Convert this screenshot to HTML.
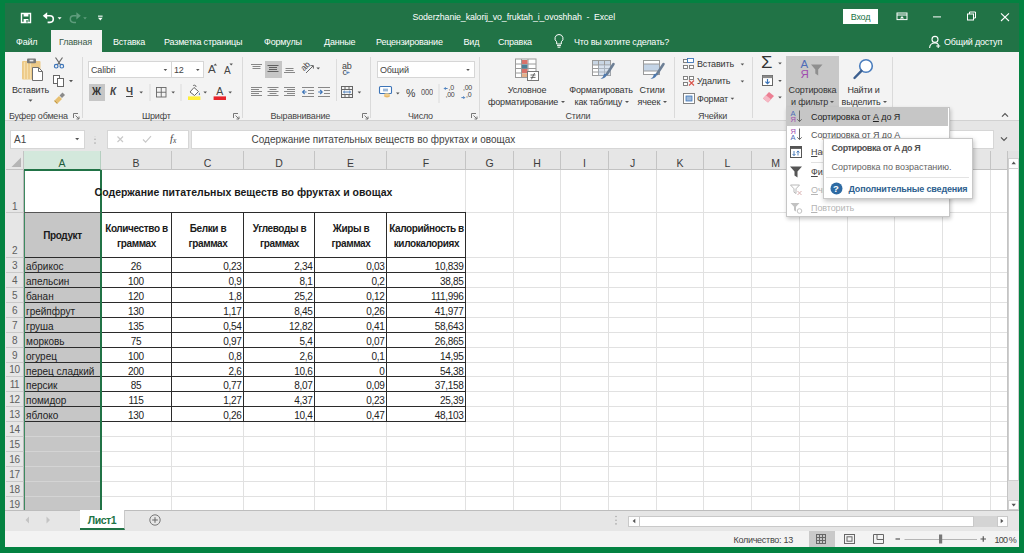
<!DOCTYPE html>
<html lang="ru">
<head>
<meta charset="utf-8">
<title>Soderzhanie_kalorij_vo_fruktah_i_ovoshhah - Excel</title>
<style>
*{box-sizing:border-box;margin:0;padding:0}
html,body{width:1024px;height:553px;overflow:hidden;background:#038241}
body{position:relative;font-family:"Liberation Sans",sans-serif;font-size:10px;color:#333;-webkit-font-smoothing:antialiased}
.abs,.abs>*{position:absolute}
#app{position:absolute;left:5px;top:3px;width:1014px;height:544px;background:#e6e6e6;overflow:hidden}
/* title bar */
#title{position:absolute;left:0;top:0;width:1014px;height:49px;background:#217346}
.t{position:absolute;white-space:nowrap;line-height:12px}
.w{color:#fff}
.tb{top:33px;font-size:9px;letter-spacing:-.2px}
#tabactive{position:absolute;left:46px;top:27px;width:51px;height:23px;background:#f3f3f3}
/* ribbon */
#ribbon{position:absolute;left:0;top:49px;width:1014px;height:69px;background:#f3f3f3;border-bottom:1px solid #d2d2d2}
.pg{position:absolute;width:1024px;height:553px}
.pg>*{position:absolute}
.rt{position:absolute;white-space:nowrap;font-size:9px;line-height:12px;letter-spacing:-.15px;color:#333}
.ln{position:absolute}
.ar{display:inline-block;width:0;height:0;border-left:2px solid transparent;border-right:2px solid transparent;border-top:2.2px solid #555;vertical-align:middle;margin-left:0}
.sep{position:absolute;top:57px;width:1px;height:61px;background:#dadada}
.gl{position:absolute;top:110px;font-size:9px;letter-spacing:-.2px;color:#444;white-space:nowrap;line-height:12px}
/* formula bar */
#fbar{position:absolute;left:0;top:119px;width:1014px;height:29px;background:#e6e6e6}
.box{position:absolute;background:#fff;border:1px solid #d6d6d6}
/* grid */
#grid{position:absolute;left:1px;top:148px;width:1001px;height:359px;background:#fff;overflow:hidden}
.ch{position:absolute;top:0;height:19px;padding-top:6px;line-height:12px;text-align:center;font-size:10.5px;color:#3c3c3c;background:#e6e6e6;border-right:1px solid #c4c4c4;border-bottom:1px solid #c2c2c2}
.rh{position:absolute;left:0;width:18px;text-align:center;font-size:10px;letter-spacing:-.4px;color:#5e5e5e;background:#e6e6e6;border-bottom:1px solid #c9c9c9;border-right:1px solid #b9b9b9}
.c{position:absolute;font-size:10px;line-height:17px;height:15px;white-space:nowrap;color:#222;letter-spacing:0}
.r{text-align:right;padding-right:1.5px;letter-spacing:-.3px}
.m{text-align:center;letter-spacing:-.3px}
.l{padding-left:2px}
.hd{position:absolute;font-size:10px;font-weight:bold;line-height:15px;text-align:center;color:#1a1a1a;letter-spacing:-.38px}
/* sheet tabs & status */
#sheetbar{position:absolute;left:0;top:507px;width:1014px;height:21px;background:#e6e6e6;border-top:1px solid #bdbdbd}
#status{position:absolute;left:0;top:528px;width:1014px;height:16px;background:#f3f3f3;overflow:hidden}
</style>
</head>
<body>
<div id="app">
<!--TITLE-->
<div id="title"><div style="position:absolute;left:1px;top:0;width:1012px;height:49px">
<!-- quick access toolbar -->
<svg style="position:absolute;left:14px;top:8px" width="90" height="16" viewBox="0 0 90 16">
 <!-- save -->
 <path d="M1.5 2.5 H10.5 V11.5 H1.5 Z" fill="none" stroke="#fff" stroke-width="1.4"/>
 <rect x="3.6" y="2.5" width="4.8" height="3" fill="#fff"/>
 <rect x="3.6" y="8" width="4.8" height="3.5" fill="#fff"/><rect x="6.4" y="9" width="1.2" height="2.5" fill="#217346"/>
 <!-- undo -->
 <path d="M27 4.800 H30 A3.300 3.300 0 0 1 30 11.400 H27.600" fill="none" stroke="#fff" stroke-width="1.600"/>
 <path d="M22.800 4.800 L27.200 1.200 V8.400 Z" fill="#fff"/>
 <path d="M37.600 6.200 h4 l-2 2.400 z" fill="#fff"/>
 <!-- redo (disabled) -->
 <path d="M56.600 4.800 H53.600 A3.300 3.300 0 0 0 53.600 11.400 H56" fill="none" stroke="#5f9d7d" stroke-width="1.500"/>
 <path d="M60.800 4.800 L56.400 1.200 V8.400 Z" fill="#5f9d7d"/>
 <path d="M63.200 6.200 h3.600 l-1.800 2.200 z" fill="#5f9d7d"/>
 <!-- customize -->
 <rect x="78" y="4.600" width="4.600" height="1.100" fill="#fff"/>
 <path d="M78 6.800 h4.600 l-2.300 2.600 z" fill="#fff"/>
</svg>
<div class="t w" style="left:0;width:1012px;top:8px;text-align:center;font-size:8.8px;letter-spacing:-.095px;padding-left:3.5px">Soderzhanie_kalorij_vo_fruktah_i_ovoshhah &nbsp;-&nbsp; Excel</div>
<div style="position:absolute;left:837px;top:6px;width:35px;height:15px;background:#fff"></div>
<div class="t" style="left:837px;top:8px;width:35px;text-align:center;font-size:9px;color:#217346;letter-spacing:-.2px">Вход</div>
<svg style="position:absolute;left:886px;top:6px" width="122" height="16" viewBox="0 0 122 16">
 <!-- ribbon display options -->
 <rect x="5" y="4" width="10" height="6.6" fill="none" stroke="#fff" stroke-width="1"/>
 <line x1="5" y1="6" x2="15" y2="6" stroke="#fff" stroke-width="1"/>
 <path d="M10 7 l2 2.6 h-4 z" fill="#fff"/>
 <!-- minimize -->
 <rect x="41" y="7.4" width="8" height="1" fill="#fff"/>
 <!-- restore -->
 <rect x="75.5" y="5" width="6" height="6" fill="none" stroke="#fff" stroke-width="1"/>
 <path d="M77.5 5 V3 H83.5 V9 H81.5" fill="none" stroke="#fff" stroke-width="1"/>
 <!-- close -->
 <path d="M109 4.4 L117 12 M117 4.4 L109 12" stroke="#fff" stroke-width="1.1" fill="none"/>
</svg>
</div></div>
<div id="tabactive"></div>
<div id="tabs" style="position:absolute;left:1px;top:0">
<div class="t w tb" style="left:10px">Файл</div>
<div class="t tb" style="left:53px;color:#3a5a48">Главная</div>
<div class="t w tb" style="left:107px">Вставка</div>
<div class="t w tb" style="left:158px">Разметка страницы</div>
<div class="t w tb" style="left:258px">Формулы</div>
<div class="t w tb" style="left:318px">Данные</div>
<div class="t w tb" style="left:370px">Рецензирование</div>
<div class="t w tb" style="left:457.5px">Вид</div>
<div class="t w tb" style="left:492px">Справка</div>
<svg style="position:absolute;left:546px;top:30px" width="14" height="16" viewBox="0 0 14 16"><path d="M7 1.5 A4 4 0 0 1 9.3 8.8 V11 H4.7 V8.8 A4 4 0 0 1 7 1.5 Z" fill="none" stroke="#fff" stroke-width="1"/><path d="M5 12.6 H9 M5.6 14.2 H8.4" stroke="#fff" stroke-width="1"/></svg>
<div class="t w tb" style="left:568px">Что вы хотите сделать?</div>
<svg style="position:absolute;left:922px;top:32px" width="14" height="14" viewBox="0 0 14 14"><circle cx="7" cy="4.4" r="3" fill="none" stroke="#fff" stroke-width="1.1"/><path d="M1.6 13 C1.8 9.6 4 8 7 8 C8.4 8 9.4 8.4 10 9" fill="none" stroke="#fff" stroke-width="1.1"/><path d="M10.2 9 V13 M8.2 11 H12.2" stroke="#fff" stroke-width="1.1"/></svg>
<div class="t w tb" style="left:938px">Общий доступ</div>
</div>

<!--RIBBON-->
<div id="ribbon"><div class="pg" style="left:-5px;top:-52px">
<!-- ===== Clipboard ===== -->
<svg style="position:absolute;left:18px;top:56px" width="66" height="50" viewBox="0 0 66 50">
 <!-- paste -->
 <rect x="4" y="5" width="18.500" height="18.500" rx="1" fill="#ecc987"/>
 <path d="M6.500 6 V23 M9.500 6 V23 M12.500 6 V23" stroke="#f6dfae" stroke-width="1.300"/>
 <rect x="9" y="2.600" width="9" height="4.600" rx="1" fill="#7a7a7a"/><rect x="11.600" y="3.800" width="3.800" height="1.600" fill="#e9e9e9"/>
 <path d="M14.500 11.500 H20.500 L24.500 15.500 V24.500 H14.500 Z" fill="#fff" stroke="#6f6f6f" stroke-width="1"/>
 <path d="M20.500 11.500 V15.500 H24.500" fill="none" stroke="#6f6f6f" stroke-width="1"/>
 <path d="M10.5 43.600 h4 l-2 2.200 z" fill="#555"/>
 <!-- cut -->
 <path d="M37.500 1.500 L42.600 8.800 M44.500 1.500 L39.400 8.800" stroke="#6b6b6b" stroke-width="1.200" fill="none"/>
 <circle cx="38.200" cy="10.200" r="1.800" fill="none" stroke="#3c74b8" stroke-width="1.200"/>
 <circle cx="43.800" cy="10.200" r="1.800" fill="none" stroke="#3c74b8" stroke-width="1.200"/>
 <!-- copy -->
 <rect x="35.5" y="19.5" width="6" height="8" fill="#fff" stroke="#666" stroke-width="1"/>
 <rect x="39.5" y="22.5" width="6" height="8" fill="#fff" stroke="#666" stroke-width="1"/>
 <path d="M51 24 h4 l-2 2.2 z" fill="#555"/>
 <!-- format painter -->
 <path d="M37 44 L41 40 L44 43 L40 47 Z" fill="#e8c070"/>
 <path d="M41.5 39.5 L44.5 36.5 L47 39 L44 42 Z" fill="#8a8a8a"/>
 <path d="M36.5 44.5 l3 3" stroke="#c79a3c" stroke-width="1.2"/>
</svg>
<div class="rt" style="left:12px;top:83.500px;width:37px;text-align:center">Вставить</div>
<div class="gl" style="left:9px">Буфер обмена</div>
<svg class="ln" style="left:73px;top:113px" width="7" height="7" viewBox="0 0 7 7"><path d="M.5 5 V.5 H5" fill="none" stroke="#777"/><path d="M2.5 2.5 L6 6 M6 3.5 V6 H3.5" fill="none" stroke="#777"/></svg>
<div class="sep" style="left:82px"></div>
<!-- ===== Font ===== -->
<div class="box" style="left:88px;top:61px;width:84px;height:17px"></div>
<div class="box" style="left:171px;top:61px;width:33px;height:17px"></div>
<div class="rt" style="left:91px;top:64px;color:#444">Calibri</div>
<div class="rt" style="left:174px;top:64px;color:#444">12</div>
<svg style="position:absolute;left:160px;top:60px" width="80" height="20" viewBox="0 0 80 20">
 <path d="M3.6 9 h3.6 l-1.8 2 z M36 9 h3.6 l-1.8 2 z" fill="#555"/>
 <path d="M53.5 5.5 l1.8 -2 l1.8 2 z" fill="#555"/><path d="M69.5 3.6 l1.7 2 l1.7 -2 z" fill="#555"/>
</svg>
<div class="rt" style="left:208px;top:62px;font-size:11.5px;line-height:14px;color:#444">A</div>
<div class="rt" style="left:224px;top:63.5px;font-size:10px;line-height:14px;color:#444">A</div>
<div style="position:absolute;left:88.5px;top:83.5px;width:16px;height:17.5px;background:#c6c6c6"></div>
<div class="rt" style="left:88.5px;top:86px;width:16px;text-align:center;font-weight:bold;font-size:10px;color:#333">Ж</div>
<div class="rt" style="left:109px;top:86px;width:8px;text-align:center;font-weight:bold;font-style:italic;font-size:10px;color:#444">К</div>
<div class="rt" style="left:125.5px;top:86px;width:8px;text-align:center;font-weight:bold;font-size:10px;color:#444;text-decoration:underline">Ч</div>
<svg style="position:absolute;left:136px;top:82px" width="104" height="22" viewBox="0 0 104 22">
 <path d="M3.4 9.6 h3.6 l-1.8 2 z M35.4 9.6 h3.6 l-1.8 2 z M67.4 9.6 h3.6 l-1.8 2 z M92.4 9.6 h3.6 l-1.8 2 z" fill="#555"/>
 <rect x="13.5" y="2" width="1" height="17" fill="#dcdcdc"/><rect x="44.5" y="2" width="1" height="17" fill="#dcdcdc"/>
 <!-- borders -->
 <rect x="20.500" y="5.500" width="9.500" height="9.500" fill="none" stroke="#666" stroke-width=".9"/><path d="M25.250 5.500 V15 M20.500 10.250 H30" stroke="#666" stroke-width=".9"/>
 <!-- fill bucket -->
 <path d="M54 10 L58 5.5 L62.5 9.5 L58.5 13.5 Z" fill="#fff" stroke="#666" stroke-width="1"/><path d="M57 4 a1.6 1.6 0 0 1 3 1" fill="none" stroke="#666" stroke-width=".9"/><path d="M63.4 10.5 q1.4 2 0 2.8 q-1.4 -.8 0 -2.8z" fill="#4a7dbd"/>
 <rect x="52" y="14.4" width="12.4" height="3.6" fill="#ffef3a"/>
 <!-- font color -->
 <rect x="77.6" y="14.4" width="12.4" height="3.6" fill="#e8242b"/>
</svg>
<div class="rt" style="left:213.5px;top:84.5px;width:12.4px;text-align:center;font-size:10.5px;color:#444">A</div>
<div class="gl" style="left:142px">Шрифт</div>
<svg class="ln" style="left:232.5px;top:113px" width="7" height="7" viewBox="0 0 7 7"><path d="M.5 5 V.5 H5" fill="none" stroke="#777"/><path d="M2.5 2.5 L6 6 M6 3.5 V6 H3.5" fill="none" stroke="#777"/></svg>
<div class="sep" style="left:241.500px"></div>
<!-- ===== Alignment ===== -->
<div style="left:264.5px;top:60.5px;width:17px;height:17.5px;background:#c6c6c6"></div>
<svg style="left:248px;top:58px" width="120" height="46" viewBox="0 0 120 46">
 <g stroke="#7a7a7a" stroke-width=".9" fill="none">
 <!-- top/middle/bottom align (row1 center y=10) -->
 <path d="M3 6.5 H14 M4.5 8.5 H12.5 M4.5 10.5 H12.5"/>
 <path d="M19.5 7.5 H30.5 M21 9.5 H29 M21 11.5 H29 M19.5 13.5 H30.5" stroke="#555"/>
 <path d="M37.5 10.5 H45.5 M37.5 12.5 H45.5 M36 14.5 H47"/>
 <!-- left/center/right (row2 center y=34) -->
 <path d="M3 29.5 H14 M3 31.5 H11 M3 33.5 H14 M3 35.5 H11 M3 37.5 H14"/>
 <path d="M19.5 29.5 H30.5 M21.5 31.5 H28.5 M19.5 33.5 H30.5 M21.5 35.5 H28.5 M19.5 37.5 H30.5"/>
 <path d="M36 29.5 H47 M39 31.5 H47 M36 33.5 H47 M39 35.5 H47 M36 37.5 H47"/>
 <!-- indent dec / inc -->
 <path d="M54 29.5 H66 M60 32.5 H66 M60 35.5 H66 M54 38.5 H66"/>
 <path d="M70 29.5 H82 M76 32.5 H82 M76 35.5 H82 M70 38.5 H82"/>
 </g>
 <path d="M58.5 34 H54.8 M56.6 32 L54.6 34 L56.6 36" stroke="#3c74b8" stroke-width="1.1" fill="none"/>
 <path d="M70.2 34 H74 M72.2 32 L74.2 34 L72.2 36" stroke="#3c74b8" stroke-width="1.1" fill="none"/>
 <!-- orientation arrow -->
 <path d="M58 15 L65 8 M62.4 7.6 H65.4 V10.6" stroke="#666" stroke-width="1" fill="none"/>
 <path d="M68.4 9.4 h3.6 l-1.8 2 z" fill="#555"/>
 <rect x="88" y="1" width="1" height="42" fill="#dcdcdc"/>
 <!-- merge -->
 <rect x="93.5" y="28.5" width="11" height="11" fill="none" stroke="#666"/>
 <path d="M93.5 31.5 H104.5 M93.5 36.5 H104.5 M97 28.5 V31.5 M101 28.5 V31.5 M97 36.5 V39.5 M101 36.5 V39.5" stroke="#666" fill="none"/>
 <path d="M95.5 34 H102.5 M96.8 32.8 L95.5 34 L96.8 35.2 M101.2 32.8 L102.5 34 L101.2 35.2" stroke="#3c74b8" stroke-width=".9" fill="none"/>
 <path d="M109.6 33.4 h3.6 l-1.8 2 z" fill="#555"/>
 <!-- wrap arrow -->
 <path d="M101.6 14.6 H99 M100 13.4 L98.8 14.6 L100 15.8" stroke="#3c74b8" stroke-width=".9" fill="none"/>
</svg>
<div class="rt" style="left:301px;top:62px;font-size:8.500px;line-height:9px;color:#444;letter-spacing:-.3px;transform:rotate(-45deg);transform-origin:50% 50%">ab</div>
<div class="rt" style="left:342px;top:61.500px;font-size:9px;line-height:8px;color:#444;letter-spacing:-.3px">ab</div>
<div class="rt" style="left:342.500px;top:67.500px;font-size:9px;line-height:8px;color:#444;letter-spacing:0">c</div>
<div class="gl" style="left:270.5px">Выравнивание</div>
<svg class="ln" style="left:361.5px;top:113px" width="7" height="7" viewBox="0 0 7 7"><path d="M.5 5 V.5 H5" fill="none" stroke="#777"/><path d="M2.5 2.5 L6 6 M6 3.5 V6 H3.5" fill="none" stroke="#777"/></svg>
<div class="sep" style="left:370px"></div>
<!-- ===== Number ===== -->
<div class="box" style="left:377px;top:61px;width:98px;height:17px"></div>
<div class="rt" style="left:380px;top:64px;color:#444">Общий</div>
<svg style="left:376px;top:60px" width="102" height="46" viewBox="0 0 102 46">
 <path d="M90.2 9 h3.6 l-1.8 2 z M20 32.4 h3.6 l-1.8 2 z" fill="#555"/>
 <!-- accounting -->
 <rect x="3.5" y="26.5" width="12" height="7" rx="1" fill="#fff" stroke="#3c74b8" stroke-width="1.1"/><rect x="7" y="28.6" width="5" height="2.8" fill="#9db9d9"/>
 <ellipse cx="11" cy="36" rx="3" ry="1.4" fill="#e9b96a"/><ellipse cx="11" cy="34.6" rx="3" ry="1.4" fill="#f2cf8e"/>
 <rect x="62.5" y="24" width="1" height="19" fill="#dcdcdc"/>
 <!-- inc/dec decimal arrows -->
 <path d="M71.6 28.5 H68.4 M69.6 27.2 L68.3 28.5 L69.6 29.8" stroke="#3c74b8" stroke-width=".9" fill="none"/>
 <path d="M85.4 37.6 H88.6 M87.4 36.3 L88.7 37.6 L87.4 38.9" stroke="#3c74b8" stroke-width=".9" fill="none"/>
</svg>
<div class="rt" style="left:405.500px;top:86.500px;font-size:11.500px;color:#3a3a3a;letter-spacing:0;transform:scaleX(.92);transform-origin:0 0">%</div>
<div class="rt" style="left:421px;top:87px;font-size:7.5px;color:#555;letter-spacing:-.2px;transform:scaleY(1.2)">000</div>
<div class="rt" style="left:448.5px;top:83.5px;font-size:7px;line-height:7px;color:#444;letter-spacing:-.3px">,0</div>
<div class="rt" style="left:445.5px;top:90.5px;font-size:7px;line-height:7px;color:#444;letter-spacing:-.3px">,00</div>
<div class="rt" style="left:463px;top:83.5px;font-size:7px;line-height:7px;color:#444;letter-spacing:-.3px">,00</div>
<div class="rt" style="left:466px;top:90.5px;font-size:7px;line-height:7px;color:#444;letter-spacing:-.3px">,0</div>
<div class="gl" style="left:408px">Число</div>
<svg class="ln" style="left:471px;top:113px" width="7" height="7" viewBox="0 0 7 7"><path d="M.5 5 V.5 H5" fill="none" stroke="#777"/><path d="M2.5 2.5 L6 6 M6 3.5 V6 H3.5" fill="none" stroke="#777"/></svg>
<div class="sep" style="left:479px"></div>
<!-- ===== Styles ===== -->
<svg style="left:512px;top:57px" width="160" height="28" viewBox="0 0 160 28">
 <!-- conditional formatting -->
 <rect x="3.500" y="2" width="20.500" height="18.500" fill="#fff" stroke="#9a9a9a"/>
 <path d="M9.500 2 V20.500 M16 2 V20.500 M3.500 7 H24 M3.500 11.500 H24 M3.500 16 H24" stroke="#9a9a9a" fill="none"/>
 <rect x="10" y="3" width="5.5" height="4" fill="#d9726a"/><rect x="10" y="7.500" width="5.500" height="4" fill="#4f7f96"/><rect x="10" y="12" width="5.5" height="4" fill="#d9726a"/><rect x="10" y="16.5" width="5.5" height="3.5" fill="#e6b08a"/>
 <rect x="15.500" y="14.500" width="11" height="9" fill="#fff" stroke="#777"/>
 <path d="M18.5 18 H23.5 M18.5 20.4 H23.5 M22.6 16 L19.4 22.4" stroke="#555" stroke-width=".9" fill="none"/>
 <!-- format as table -->
 <rect x="80.5" y="3.5" width="18" height="15" fill="#fff" stroke="#9a9a9a"/>
 <rect x="81" y="4" width="17" height="4" fill="#c9d6e4"/>
 <path d="M86.5 3.5 V18.5 M92.5 3.5 V18.5 M80.5 8 H98.5 M80.5 11.5 H98.5 M80.5 15 H98.5" stroke="#9a9a9a" fill="none"/>
 <rect x="86.5" y="8" width="12" height="10.5" fill="#b8cbe0" opacity=".55"/>
 <path d="M101.5 7 L95 17" stroke="#6d7f95" stroke-width="2.6" stroke-linecap="round"/>
 <path d="M95.5 16.5 q-1.5 5 -7 5.5 q3 -1.5 3.5 -5 z" fill="#4f79ad"/>
 <!-- cell styles -->
 <rect x="131.5" y="3.5" width="16" height="14" fill="#fff" stroke="#9a9a9a"/>
 <rect x="132" y="7" width="15" height="7" fill="#c4d4e6"/>
 <path d="M131.5 7 H147.5 M131.5 14 H147.5" stroke="#9a9a9a" fill="none"/>
 <path d="M151.5 7 L145 17" stroke="#6d7f95" stroke-width="2.6" stroke-linecap="round"/>
 <path d="M145.5 16.5 q-1.5 5 -7 5.5 q3 -1.5 3.5 -5 z" fill="#4f79ad"/>
</svg>
<div class="rt" style="left:497px;top:83.500px;width:60px;text-align:center">Условное</div>
<div class="rt" style="left:488px;top:95.500px">форматирование <span class="ar"></span></div>
<div class="rt" style="left:569px;top:83.500px;width:64px;text-align:center">Форматировать</div>
<div class="rt" style="left:574.5px;top:95.500px">как таблицу <span class="ar"></span></div>
<div class="rt" style="left:637px;top:83.500px;width:30px;text-align:center">Стили</div>
<div class="rt" style="left:637.5px;top:95.500px">ячеек <span class="ar"></span></div>
<div class="gl" style="left:565.5px">Стили</div>
<div class="sep" style="left:674px"></div>
<!-- ===== Cells ===== -->
<svg style="left:681px;top:56px" width="70" height="50" viewBox="0 0 70 50">
 <g fill="#fff" stroke="#777" stroke-width=".9">
 <rect x="2.5" y="3.5" width="4" height="3"/><rect x="2.5" y="9.5" width="4" height="3"/><rect x="8.500" y="9.5" width="4" height="3"/>
 <rect x="2.5" y="20.5" width="4" height="3"/><rect x="2.5" y="26.5" width="4" height="3"/><rect x="8.5" y="20.5" width="4" height="3"/>
 <rect x="2.5" y="37.5" width="11" height="10"/>
 </g>
 <rect x="6.5" y="2.5" width="6" height="4" fill="#fff" stroke="#3c74b8" stroke-width=".9"/>
 <path d="M8 24.500 L13 29.500 M13 24.500 L8 29.500" stroke="#d9534a" stroke-width="1.1"/>
 <rect x="5" y="40" width="6" height="5" fill="#9db9d9" stroke="#3c74b8" stroke-width=".8"/>
 <path d="M59.600 7.400 h3.600 l-1.800 2 z M59.600 24.400 h3.600 l-1.800 2 z M49.600 41.800 h3.600 l-1.800 2 z" fill="#555"/>
</svg>
<div class="rt" style="left:697px;top:58px">Вставить</div>
<div class="rt" style="left:697px;top:75px">Удалить</div>
<div class="rt" style="left:697px;top:92.5px">Формат</div>
<div class="gl" style="left:698px">Ячейки</div>
<div class="sep" style="left:752px"></div>
<!-- ===== Editing ===== -->
<div style="left:786px;top:55.500px;width:53px;height:52px;background:#c8c8c8"></div>
<svg style="left:758px;top:55px" width="134" height="52" viewBox="0 0 134 52">
 <path d="M20.200 7.600 h3.600 l-1.800 2 z M20.200 25 h3.600 l-1.800 2 z M20.200 41.600 h3.600 l-1.800 2 z" fill="#555"/>
 <!-- fill -->
 <rect x="4.500" y="20.500" width="10" height="10" fill="#fff" stroke="#666"/><rect x="4.500" y="20.500" width="10" height="2.600" fill="#8a8a8a"/>
 <path d="M9.500 24 V28.500 M7.400 26.600 L9.500 28.700 L11.600 26.600" stroke="#3c74b8" stroke-width="1.200" fill="none"/>
 <!-- eraser -->
 <path d="M5 43.500 L11 37 L16 41 L10 47.500 Z" fill="#ec7f93"/><path d="M5 43.500 L8 40.300 L13 44.300 L10 47.500 Z" fill="#f6b8c4"/>
 <!-- funnel -->
 <path d="M53 9.500 H64.500 L60.200 14.500 V20.500 L57.300 18.500 V14.500 Z" fill="#8f8f8f"/>
 <!-- magnifier -->
 <circle cx="108" cy="11" r="6.300" fill="#fff" stroke="#4a7dbd" stroke-width="1.600"/>
 <path d="M103.400 15.800 L96.500 23" stroke="#3c5f8f" stroke-width="2.400" stroke-linecap="round"/>
</svg>
<div class="rt" style="left:761px;top:55px;font-size:16px;line-height:15px;color:#333;letter-spacing:0;transform:scaleX(1.15);transform-origin:0 0">Σ</div>
<div class="rt" style="left:800.500px;top:58.500px;font-size:11.500px;line-height:11px;color:#4f6db8;letter-spacing:0">А</div>
<div class="rt" style="left:800.500px;top:69px;font-size:11.500px;line-height:11px;color:#a04db0;letter-spacing:0">Я</div>
<div class="rt" style="left:786px;top:83.500px;width:53px;text-align:center">Сортировка</div>
<div class="rt" style="left:791px;top:95.500px">и фильтр <span class="ar"></span></div>
<div class="rt" style="left:841px;top:83.500px;width:45px;text-align:center">Найти и</div>
<div class="rt" style="left:841.5px;top:95.500px">выделить <span class="ar"></span></div>
<div class="sep" style="left:892px"></div>
<svg style="left:1001px;top:112px" width="8" height="6" viewBox="0 0 8 6"><path d="M1 4.600 L4 1.600 L7 4.600" fill="none" stroke="#555" stroke-width="1.200"/></svg>
</div></div>

<!--FBAR-->
<div id="fbar"><div class="pg" style="left:-5px;top:-122px">
<div class="box" style="left:9.5px;top:130px;width:75px;height:18.5px"></div>
<div class="rt" style="left:14px;top:133.5px;font-size:10px;color:#444;letter-spacing:0">A1</div>
<svg style="left:74px;top:136px" width="24" height="12" viewBox="0 0 24 12"><path d="M1.200 2 h4 l-2 2.300 z" fill="#555"/><circle cx="21" cy="-.5" r=".8" fill="#aaa"/><circle cx="21" cy="3.300" r=".8" fill="#aaa"/><circle cx="21" cy="7.100" r=".8" fill="#aaa"/></svg>
<div class="box" style="left:107px;top:130px;width:81.500px;height:18.500px"></div>
<svg style="left:110px;top:132px" width="76" height="15" viewBox="0 0 76 15">
 <path d="M7.500 4.500 L13 10 M13 4.500 L7.500 10" stroke="#c9c9c9" stroke-width="1.200" fill="none"/>
 <path d="M33 7.500 L35.600 10.200 L41 4.200" stroke="#c9c9c9" stroke-width="1.200" fill="none"/>
</svg>
<div class="rt" style="left:170px;top:133px;font-size:10.5px;font-style:italic;font-family:'Liberation Serif',serif;color:#444;letter-spacing:0">f<span style="font-size:7.5px;vertical-align:-1px">x</span></div>
<div class="box" style="left:191px;top:130px;width:803px;height:18.500px"></div>
<div class="rt" style="left:251.500px;top:133.500px;font-size:10px;color:#444;letter-spacing:.01px">Содержание питательных веществ во фруктах и овощах</div>
<svg style="left:1000px;top:136px" width="8" height="6" viewBox="0 0 8 6"><path d="M1 1.400 L4 4.400 L7 1.400" fill="none" stroke="#555" stroke-width="1.200"/></svg>
</div></div>

<!--GRID-->
<div id="grid">
<div style="position:absolute;left:18px;top:61.8px;width:77px;height:320px;background:#c6c6c6"></div>
<svg style="position:absolute;left:0;top:0" width="1001" height="359" viewBox="0 0 1001 359" shape-rendering="crispEdges"><line x1="94.5" y1="19" x2="94.5" y2="359" stroke="#e1e1e1"/><line x1="165.5" y1="19" x2="165.5" y2="359" stroke="#e1e1e1"/><line x1="237.5" y1="19" x2="237.5" y2="359" stroke="#e1e1e1"/><line x1="308.5" y1="19" x2="308.5" y2="359" stroke="#e1e1e1"/><line x1="380.5" y1="19" x2="380.5" y2="359" stroke="#e1e1e1"/><line x1="459.5" y1="19" x2="459.5" y2="359" stroke="#e1e1e1"/><line x1="507.5" y1="19" x2="507.5" y2="359" stroke="#e1e1e1"/><line x1="554.5" y1="19" x2="554.5" y2="359" stroke="#e1e1e1"/><line x1="602.5" y1="19" x2="602.5" y2="359" stroke="#e1e1e1"/><line x1="650.5" y1="19" x2="650.5" y2="359" stroke="#e1e1e1"/><line x1="697.5" y1="19" x2="697.5" y2="359" stroke="#e1e1e1"/><line x1="745.5" y1="19" x2="745.5" y2="359" stroke="#e1e1e1"/><line x1="793.5" y1="19" x2="793.5" y2="359" stroke="#e1e1e1"/><line x1="841.5" y1="19" x2="841.5" y2="359" stroke="#e1e1e1"/><line x1="888.5" y1="19" x2="888.5" y2="359" stroke="#e1e1e1"/><line x1="936.5" y1="19" x2="936.5" y2="359" stroke="#e1e1e1"/><line x1="984.5" y1="19" x2="984.5" y2="359" stroke="#e1e1e1"/><line x1="1031.5" y1="19" x2="1031.5" y2="359" stroke="#e1e1e1"/><line x1="18" y1="61.5" x2="1001" y2="61.5" stroke="#e1e1e1"/><line x1="18" y1="106.5" x2="1001" y2="106.5" stroke="#e1e1e1"/><line x1="18" y1="121.5" x2="1001" y2="121.5" stroke="#e1e1e1"/><line x1="18" y1="136.5" x2="1001" y2="136.5" stroke="#e1e1e1"/><line x1="18" y1="151.5" x2="1001" y2="151.5" stroke="#e1e1e1"/><line x1="18" y1="166.5" x2="1001" y2="166.5" stroke="#e1e1e1"/><line x1="18" y1="181.5" x2="1001" y2="181.5" stroke="#e1e1e1"/><line x1="18" y1="196.5" x2="1001" y2="196.5" stroke="#e1e1e1"/><line x1="18" y1="211.5" x2="1001" y2="211.5" stroke="#e1e1e1"/><line x1="18" y1="225.5" x2="1001" y2="225.5" stroke="#e1e1e1"/><line x1="18" y1="240.5" x2="1001" y2="240.5" stroke="#e1e1e1"/><line x1="18" y1="255.5" x2="1001" y2="255.5" stroke="#e1e1e1"/><line x1="18" y1="270.5" x2="1001" y2="270.5" stroke="#e1e1e1"/><line x1="18" y1="285.5" x2="1001" y2="285.5" stroke="#e1e1e1"/><line x1="18" y1="300.5" x2="1001" y2="300.5" stroke="#e1e1e1"/><line x1="18" y1="315.5" x2="1001" y2="315.5" stroke="#e1e1e1"/><line x1="18" y1="330.5" x2="1001" y2="330.5" stroke="#e1e1e1"/><line x1="18" y1="345.5" x2="1001" y2="345.5" stroke="#e1e1e1"/><line x1="18" y1="360.5" x2="1001" y2="360.5" stroke="#e1e1e1"/><rect x="18" y="19" width="441" height="42" fill="#fff"/><line x1="18" y1="270.5" x2="94" y2="270.5" stroke="#d4d4d4"/><line x1="18" y1="285.5" x2="94" y2="285.5" stroke="#d4d4d4"/><line x1="18" y1="300.5" x2="94" y2="300.5" stroke="#d4d4d4"/><line x1="18" y1="315.5" x2="94" y2="315.5" stroke="#d4d4d4"/><line x1="18" y1="330.5" x2="94" y2="330.5" stroke="#d4d4d4"/><line x1="18" y1="345.5" x2="94" y2="345.5" stroke="#d4d4d4"/><line x1="18" y1="360.5" x2="94" y2="360.5" stroke="#d4d4d4"/><line x1="18.5" y1="61.0" x2="18.5" y2="271.0" stroke="#2b2b2b"/><line x1="94.5" y1="61.0" x2="94.5" y2="271.0" stroke="#2b2b2b"/><line x1="165.5" y1="61.0" x2="165.5" y2="271.0" stroke="#2b2b2b"/><line x1="237.5" y1="61.0" x2="237.5" y2="271.0" stroke="#2b2b2b"/><line x1="308.5" y1="61.0" x2="308.5" y2="271.0" stroke="#2b2b2b"/><line x1="380.5" y1="61.0" x2="380.5" y2="271.0" stroke="#2b2b2b"/><line x1="459.5" y1="61.0" x2="459.5" y2="271.0" stroke="#2b2b2b"/><line x1="17.0" y1="61.5" x2="460.0" y2="61.5" stroke="#2b2b2b"/><line x1="17.0" y1="106.5" x2="460.0" y2="106.5" stroke="#2b2b2b"/><line x1="17.0" y1="121.5" x2="460.0" y2="121.5" stroke="#2b2b2b"/><line x1="17.0" y1="136.5" x2="460.0" y2="136.5" stroke="#2b2b2b"/><line x1="17.0" y1="151.5" x2="460.0" y2="151.5" stroke="#2b2b2b"/><line x1="17.0" y1="166.5" x2="460.0" y2="166.5" stroke="#2b2b2b"/><line x1="17.0" y1="181.5" x2="460.0" y2="181.5" stroke="#2b2b2b"/><line x1="17.0" y1="196.5" x2="460.0" y2="196.5" stroke="#2b2b2b"/><line x1="17.0" y1="211.5" x2="460.0" y2="211.5" stroke="#2b2b2b"/><line x1="17.0" y1="225.5" x2="460.0" y2="225.5" stroke="#2b2b2b"/><line x1="17.0" y1="240.5" x2="460.0" y2="240.5" stroke="#2b2b2b"/><line x1="17.0" y1="255.5" x2="460.0" y2="255.5" stroke="#2b2b2b"/><line x1="17.0" y1="270.5" x2="460.0" y2="270.5" stroke="#2b2b2b"/><rect x="18" y="18" width="1" height="359" fill="#3d8a60"/><rect x="94" y="18" width="1.5" height="359" fill="#217346"/><rect x="17" y="18" width="78" height="2" fill="#217346"/><rect x="18" y="61" width="77" height="1" fill="#555"/></svg>
<div class="ch" style="left:0;width:18px;background:#e6e6e6"><svg width="18" height="19" style="position:absolute;left:0;top:0"><path d="M15 6.5 L15 16 L5.5 16 Z" fill="#b5b5b5"/></svg></div>
<div class="ch" style="left:18px;width:77px;background:#d3e8dc;color:#1e5c3a;border-bottom:1px solid #217346;border-right-color:#b5cfc0;">A</div>
<div class="ch" style="left:95px;width:71px;">B</div>
<div class="ch" style="left:166px;width:72px;">C</div>
<div class="ch" style="left:238px;width:71px;">D</div>
<div class="ch" style="left:309px;width:72px;">E</div>
<div class="ch" style="left:381px;width:79px;">F</div>
<div class="ch" style="left:460px;width:48px;">G</div>
<div class="ch" style="left:508px;width:47px;">H</div>
<div class="ch" style="left:555px;width:48px;">I</div>
<div class="ch" style="left:603px;width:48px;">J</div>
<div class="ch" style="left:651px;width:47px;">K</div>
<div class="ch" style="left:698px;width:48px;">L</div>
<div class="ch" style="left:746px;width:48px;">M</div>
<div class="ch" style="left:794px;width:48px;">N</div>
<div class="ch" style="left:842px;width:47px;">O</div>
<div class="ch" style="left:889px;width:48px;">P</div>
<div class="ch" style="left:937px;width:48px;">Q</div>
<div class="ch" style="left:985px;width:47px;">R</div>
<div class="rh" style="top:19px;height:43px;line-height:74.5px">1</div>
<div class="rh" style="top:62px;height:45px;line-height:76.5px">2</div>
<div class="rh" style="top:107px;height:15px;line-height:16.5px">3</div>
<div class="rh" style="top:122px;height:15px;line-height:16.5px">4</div>
<div class="rh" style="top:137px;height:15px;line-height:16.5px">5</div>
<div class="rh" style="top:152px;height:15px;line-height:16.5px">6</div>
<div class="rh" style="top:167px;height:15px;line-height:16.5px">7</div>
<div class="rh" style="top:182px;height:15px;line-height:16.5px">8</div>
<div class="rh" style="top:197px;height:15px;line-height:16.5px">9</div>
<div class="rh" style="top:212px;height:14px;line-height:14.5px">10</div>
<div class="rh" style="top:226px;height:15px;line-height:16.5px">11</div>
<div class="rh" style="top:241px;height:15px;line-height:16.5px">12</div>
<div class="rh" style="top:256px;height:15px;line-height:16.5px">13</div>
<div class="rh" style="top:271px;height:15px;line-height:16.5px">14</div>
<div class="rh" style="top:286px;height:15px;line-height:16.5px">15</div>
<div class="rh" style="top:301px;height:15px;line-height:16.5px">16</div>
<div class="rh" style="top:316px;height:15px;line-height:16.5px">17</div>
<div class="rh" style="top:331px;height:15px;line-height:16.5px">18</div>
<div class="rh" style="top:346px;height:15px;line-height:16.5px">19</div>
<div class="c l" style="left:18px;top:107px;width:76px">абрикос</div>
<div class="c m" style="left:95px;top:107px;width:70px">26</div>
<div class="c r" style="left:166px;top:107px;width:71px">0,23</div>
<div class="c r" style="left:238px;top:107px;width:70px">2,34</div>
<div class="c r" style="left:309px;top:107px;width:71px">0,03</div>
<div class="c r" style="left:381px;top:107px;width:78px">10,839</div>
<div class="c l" style="left:18px;top:122px;width:76px">апельсин</div>
<div class="c m" style="left:95px;top:122px;width:70px">100</div>
<div class="c r" style="left:166px;top:122px;width:71px">0,9</div>
<div class="c r" style="left:238px;top:122px;width:70px">8,1</div>
<div class="c r" style="left:309px;top:122px;width:71px">0,2</div>
<div class="c r" style="left:381px;top:122px;width:78px">38,85</div>
<div class="c l" style="left:18px;top:137px;width:76px">банан</div>
<div class="c m" style="left:95px;top:137px;width:70px">120</div>
<div class="c r" style="left:166px;top:137px;width:71px">1,8</div>
<div class="c r" style="left:238px;top:137px;width:70px">25,2</div>
<div class="c r" style="left:309px;top:137px;width:71px">0,12</div>
<div class="c r" style="left:381px;top:137px;width:78px">111,996</div>
<div class="c l" style="left:18px;top:152px;width:76px">грейпфрут</div>
<div class="c m" style="left:95px;top:152px;width:70px">130</div>
<div class="c r" style="left:166px;top:152px;width:71px">1,17</div>
<div class="c r" style="left:238px;top:152px;width:70px">8,45</div>
<div class="c r" style="left:309px;top:152px;width:71px">0,26</div>
<div class="c r" style="left:381px;top:152px;width:78px">41,977</div>
<div class="c l" style="left:18px;top:167px;width:76px">груша</div>
<div class="c m" style="left:95px;top:167px;width:70px">135</div>
<div class="c r" style="left:166px;top:167px;width:71px">0,54</div>
<div class="c r" style="left:238px;top:167px;width:70px">12,82</div>
<div class="c r" style="left:309px;top:167px;width:71px">0,41</div>
<div class="c r" style="left:381px;top:167px;width:78px">58,643</div>
<div class="c l" style="left:18px;top:182px;width:76px">морковь</div>
<div class="c m" style="left:95px;top:182px;width:70px">75</div>
<div class="c r" style="left:166px;top:182px;width:71px">0,97</div>
<div class="c r" style="left:238px;top:182px;width:70px">5,4</div>
<div class="c r" style="left:309px;top:182px;width:71px">0,07</div>
<div class="c r" style="left:381px;top:182px;width:78px">26,865</div>
<div class="c l" style="left:18px;top:197px;width:76px">огурец</div>
<div class="c m" style="left:95px;top:197px;width:70px">100</div>
<div class="c r" style="left:166px;top:197px;width:71px">0,8</div>
<div class="c r" style="left:238px;top:197px;width:70px">2,6</div>
<div class="c r" style="left:309px;top:197px;width:71px">0,1</div>
<div class="c r" style="left:381px;top:197px;width:78px">14,95</div>
<div class="c l" style="left:18px;top:212px;width:76px">перец сладкий</div>
<div class="c m" style="left:95px;top:212px;width:70px">200</div>
<div class="c r" style="left:166px;top:212px;width:71px">2,6</div>
<div class="c r" style="left:238px;top:212px;width:70px">10,6</div>
<div class="c r" style="left:309px;top:212px;width:71px">0</div>
<div class="c r" style="left:381px;top:212px;width:78px">54,38</div>
<div class="c l" style="left:18px;top:226px;width:76px">персик</div>
<div class="c m" style="left:95px;top:226px;width:70px">85</div>
<div class="c r" style="left:166px;top:226px;width:71px">0,77</div>
<div class="c r" style="left:238px;top:226px;width:70px">8,07</div>
<div class="c r" style="left:309px;top:226px;width:71px">0,09</div>
<div class="c r" style="left:381px;top:226px;width:78px">37,158</div>
<div class="c l" style="left:18px;top:241px;width:76px">помидор</div>
<div class="c m" style="left:95px;top:241px;width:70px">115</div>
<div class="c r" style="left:166px;top:241px;width:71px">1,27</div>
<div class="c r" style="left:238px;top:241px;width:70px">4,37</div>
<div class="c r" style="left:309px;top:241px;width:71px">0,23</div>
<div class="c r" style="left:381px;top:241px;width:78px">25,39</div>
<div class="c l" style="left:18px;top:256px;width:76px">яблоко</div>
<div class="c m" style="left:95px;top:256px;width:70px">130</div>
<div class="c r" style="left:166px;top:256px;width:71px">0,26</div>
<div class="c r" style="left:238px;top:256px;width:70px">10,4</div>
<div class="c r" style="left:309px;top:256px;width:71px">0,47</div>
<div class="c r" style="left:381px;top:256px;width:78px">48,103</div>
<div class="hd" style="left:18px;top:77px;width:77px">Продукт</div>
<div class="hd" style="left:91px;top:70px;width:79px">Количество в<br>граммах</div>
<div class="hd" style="left:162px;top:70px;width:80px">Белки в<br>граммах</div>
<div class="hd" style="left:234px;top:70px;width:79px">Углеводы в<br>граммах</div>
<div class="hd" style="left:305px;top:70px;width:80px">Жиры в<br>граммах</div>
<div class="hd" style="left:377px;top:70px;width:87px">Калорийность в<br>килокалориях</div>
<div class="hd" id="ttl" style="left:18px;top:34px;width:439px;font-size:10.5px;letter-spacing:0">Содержание питательных веществ во фруктах и овощах</div>
</div>
<!--SHEETBAR-->
<div id="sheetbar"><div class="pg" style="left:-5px;top:-511px">
<svg style="left:20px;top:514px" width="40" height="12" viewBox="0 0 40 12"><path d="M9 2.500 L5.500 6 L9 9.500 Z M26.500 2.500 L30 6 L26.500 9.500 Z" fill="#c4c4c4"/></svg>
<div style="left:79.5px;top:510px;width:45.5px;height:19.500px;background:#fff;border-bottom:2px solid #217346;border-right:1px solid #c9c9c9"></div>
<div class="rt" style="left:79px;top:514px;width:46px;text-align:center;font-weight:bold;font-size:10.5px;color:#217346;letter-spacing:-.45px">Лист1</div>
<svg style="left:148px;top:513px" width="14" height="14" viewBox="0 0 14 14"><circle cx="7" cy="7" r="5.200" fill="none" stroke="#777" stroke-width="1"/><path d="M7 4.200 V9.800 M4.200 7 H9.800" stroke="#666" stroke-width="1"/></svg>
<svg style="left:612px;top:514px" width="8" height="13" viewBox="0 0 8 13"><circle cx="4" cy="2.500" r=".8" fill="#aaa"/><circle cx="4" cy="6.200" r=".8" fill="#aaa"/><circle cx="4" cy="9.900" r=".8" fill="#aaa"/></svg>
<div style="left:628px;top:515.500px;width:380px;height:11px;background:#d4d4d4"></div>
<div style="left:628px;top:515.500px;width:11.500px;height:11px;background:#fdfdfd;border:1px solid #c9c9c9"></div>
<div style="left:639.500px;top:515.500px;width:334px;height:11px;background:#fff;border:1px solid #c9c9c9;border-left:0"></div>
<div style="left:996.500px;top:515.500px;width:11.500px;height:11px;background:#fdfdfd;border:1px solid #c9c9c9"></div>
<svg style="left:628px;top:515px" width="380" height="12" viewBox="0 0 380 12"><path d="M7.300 3.800 L4.600 6 L7.300 8.200 Z M372.700 3.800 L375.400 6 L372.700 8.200 Z" fill="#555"/></svg>
</div></div>
<div id="status"><div class="pg" style="left:-5px;top:-531px">
<div class="rt" style="left:733.500px;top:533.500px;color:#444;letter-spacing:-.28px">Количество: 13</div>
<div style="left:808.500px;top:530px;width:26.500px;height:18px;background:#c9c9c9"></div>
<svg style="left:812px;top:532px" width="80" height="14" viewBox="0 0 80 14">
 <g fill="none" stroke="#666" stroke-width="1">
 <rect x="4.500" y="2.500" width="9" height="9"/><path d="M7.500 2.500 V11.500 M10.500 2.500 V11.500 M4.500 5.500 H13.500 M4.500 8.500 H13.500"/>
 <rect x="32.500" y="2.500" width="10" height="9"/><rect x="35" y="4.800" width="5" height="4.400"/>
 <path d="M61.500 11.500 V2.500 H71.500 V11.500 Z M65 2.500 V7.500 H71.500"/>
 </g>
</svg>
<svg style="left:892px;top:532px" width="100" height="14" viewBox="0 0 100 14">
 <path d="M3.500 7 H8" stroke="#555" stroke-width="1.200"/>
 <path d="M12.500 7.500 H85" stroke="#b5b5b5" stroke-width="1"/>
 <rect x="47" y="2.500" width="3.200" height="9" fill="#777"/>
 <path d="M88.500 7 H94 M91.250 4.200 V9.800" stroke="#555" stroke-width="1.200"/>
</svg>
<div class="rt" style="left:994.500px;top:533.500px;color:#444;letter-spacing:-.7px;word-spacing:-.5px">100 %</div>
</div></div>

<!-- vertical scrollbar -->
<div class="pg" style="left:-5px;top:-3px">
<div style="left:1007px;top:151px;width:12px;height:359px;background:#e2e2e2;border-left:1px solid #c4c4c4"></div>
<div style="left:1008px;top:157.500px;width:11px;height:11px;background:#fdfdfd;border:1px solid #cfcfcf"></div>
<div style="left:1008px;top:168.500px;width:11px;height:312px;background:#fff;border:1px solid #cfcfcf;border-top:0"></div>
<div style="left:1008px;top:499.500px;width:11px;height:10.500px;background:#fdfdfd;border:1px solid #cfcfcf"></div>
<svg style="left:1008px;top:157px" width="11" height="354" viewBox="0 0 11 354"><path d="M3.500 7.300 L5.700 4.600 L7.900 7.300 Z M3.500 346.700 L5.700 349.400 L7.900 346.700 Z" fill="#555"/></svg>
<!-- dropdown menu -->
<div style="left:785.500px;top:106.500px;width:164px;height:110.500px;background:#fff;border:1px solid #c6c6c6;box-shadow:1px 2px 4px rgba(0,0,0,.22)"></div>
<div style="left:786.500px;top:108px;width:161.500px;height:17.500px;background:#c6c6c6"></div>
<div class="rt" style="left:811px;top:110.500px;color:#222;letter-spacing:-.1px">Сортировка от <u>А</u> до Я</div>
<div class="rt" style="left:811px;top:128.500px;color:#555;letter-spacing:-.1px">Сортировка от <u>Я</u> до А</div>
<div class="rt" style="left:811px;top:146px;color:#444;letter-spacing:-.1px"><u>Н</u>астраиваемая сортировка...</div>
<div style="left:811px;top:161.500px;width:136px;height:1px;background:#e1e1e1"></div>
<div class="rt" style="left:811px;top:166px;color:#444;letter-spacing:-.1px"><u>Ф</u>ильтр</div>
<div class="rt" style="left:811px;top:183.500px;color:#b5b5b5;letter-spacing:-.1px"><u>О</u>чистить</div>
<div class="rt" style="left:811px;top:201.500px;color:#b5b5b5;letter-spacing:-.1px"><u>П</u>овторить</div>
<svg style="left:788px;top:108px" width="16" height="108" viewBox="0 0 16 108">
 <!-- sort arrows -->
 <path d="M11.500 2.500 V13.500 M9.300 11.300 L11.500 13.600 L13.700 11.300" stroke="#666" stroke-width="1" fill="none"/>
 <path d="M11.500 20.500 V31.500 M9.300 29.300 L11.500 31.600 L13.700 29.300" stroke="#666" stroke-width="1" fill="none"/>
 <!-- custom sort -->
 <rect x="2.500" y="38.500" width="11" height="11" fill="#fff" stroke="#555"/><rect x="2.500" y="38.500" width="11" height="2.400" fill="#555"/>
 <path d="M6 43 V47.500 M4.600 46 L6 47.600 L7.400 46 M10 47.500 V43 M8.600 44.500 L10 42.900 L11.400 44.500" stroke="#3c74b8" stroke-width=".9" fill="none"/>
 <!-- filter -->
 <path d="M2 58.500 H14 L9.500 63.500 V69.500 L6.500 67.500 V63.500 Z" fill="#555"/>
 <!-- clear -->
 <path d="M2.500 77 H11.500 L8 80.800 V85.500 L6 84.200 V80.800 Z" fill="none" stroke="#b9b9b9" stroke-width="1"/>
 <path d="M9.500 83 L13.500 87 M13.500 83 L9.500 87" stroke="#d9b0b0" stroke-width="1"/>
 <!-- reapply -->
 <path d="M2.500 95 H11.500 L8 98.800 V103.500 L6 102.200 V98.800 Z" fill="#c2c2c2"/>
 <circle cx="11.500" cy="103" r="2.300" fill="none" stroke="#c2c2c2" stroke-width="1"/>
</svg>
<div class="rt" style="left:790.500px;top:109.500px;font-size:7.500px;line-height:7px;color:#4f6db8;letter-spacing:0">А</div>
<div class="rt" style="left:790.500px;top:116px;font-size:7.500px;line-height:7px;color:#a04db0;letter-spacing:0">Я</div>
<div class="rt" style="left:790.500px;top:127.500px;font-size:7.500px;line-height:7px;color:#a04db0;letter-spacing:0">Я</div>
<div class="rt" style="left:790.500px;top:134px;font-size:7.500px;line-height:7px;color:#4f6db8;letter-spacing:0">А</div>
<!-- tooltip -->
<div style="left:822.500px;top:137.500px;width:150.500px;height:61.500px;background:#fff;border:1px solid #c8c8c8;box-shadow:1px 2px 5px rgba(0,0,0,.25)"></div>
<div class="rt" style="left:831.500px;top:142px;font-weight:bold;color:#505050;letter-spacing:-.42px">Сортировка от А до Я</div>
<div class="rt" style="left:831.500px;top:160.500px;color:#666;letter-spacing:-.03px">Сортировка по возрастанию.</div>
<div style="left:826px;top:176.500px;width:143px;height:1px;background:#e3e3e3"></div>
<svg style="left:829.500px;top:182px" width="13" height="13" viewBox="0 0 13 13"><circle cx="6.500" cy="6.500" r="6" fill="#2d6aa3"/></svg>
<div class="rt" style="left:829.500px;top:182.500px;width:13px;text-align:center;font-weight:bold;font-size:9.500px;color:#fff;letter-spacing:0">?</div>
<div class="rt" style="left:848.500px;top:182.500px;font-weight:bold;color:#2e5f8f;letter-spacing:-.18px">Дополнительные сведения</div>
</div>

</div>
</body>
</html>
